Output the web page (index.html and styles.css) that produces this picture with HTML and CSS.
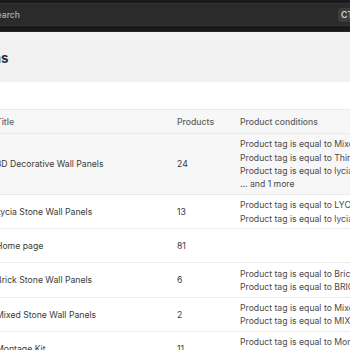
FILE: index.html
```html
<!DOCTYPE html>
<html lang="en">
<head>
<meta charset="utf-8">
<title>Collections</title>
<link rel="stylesheet" href="styles.css">
</head>
<body>
<header class="topbar">
  <div class="search">
    <span class="search-text">Search</span>
    <span class="kbd">CTRL K</span>
  </div>
</header>
<main class="page">
  <h1 class="page-title">Collections</h1>
  <section class="card">
    <div class="card-bar"></div>
    <table class="table">
      <colgroup>
        <col class="c-lead">
        <col class="c-title">
        <col class="c-products">
        <col class="c-cond">
      </colgroup>
      <thead>
        <tr>
          <th class="lead"></th>
          <th>Title</th>
          <th>Products</th>
          <th>Product conditions</th>
        </tr>
      </thead>
      <tbody>
        <tr class="hover">
          <td class="lead"><div class="thumb"></div></td>
          <td class="title">3D Decorative Wall Panels</td>
          <td class="num">24</td>
          <td class="cond">
            <div>Product tag is equal to Mixed Stone</div>
            <div>Product tag is equal to Thin Stone</div>
            <div>Product tag is equal to lycia</div>
            <div>... and 1 more</div>
          </td>
        </tr>
        <tr>
          <td class="lead"><div class="thumb"></div></td>
          <td class="title">Lycia Stone Wall Panels</td>
          <td class="num">13</td>
          <td class="cond">
            <div>Product tag is equal to LYCIA</div>
            <div>Product tag is equal to lycia</div>
          </td>
        </tr>
        <tr>
          <td class="lead"><div class="thumb"></div></td>
          <td class="title">Home page</td>
          <td class="num">81</td>
          <td class="cond"></td>
        </tr>
        <tr>
          <td class="lead"><div class="thumb"></div></td>
          <td class="title">Brick Stone Wall Panels</td>
          <td class="num">6</td>
          <td class="cond">
            <div>Product tag is equal to Brick</div>
            <div>Product tag is equal to BRICK</div>
          </td>
        </tr>
        <tr>
          <td class="lead"><div class="thumb"></div></td>
          <td class="title">Mixed Stone Wall Panels</td>
          <td class="num">2</td>
          <td class="cond">
            <div>Product tag is equal to Mixed</div>
            <div>Product tag is equal to MIXED</div>
          </td>
        </tr>
        <tr>
          <td class="lead"><div class="thumb"></div></td>
          <td class="title">Montage Kit</td>
          <td class="num">11</td>
          <td class="cond">
            <div>Product tag is equal to Montage</div>
            <div>Product tag is equal to MONTAGE</div>
          </td>
        </tr>
      </tbody>
    </table>
  </section>
</main>
</body>
</html>
```
FILE: styles.css
```css
* { box-sizing: border-box; }

html, body {
  margin: 0;
  padding: 0;
  background: #f1f1f1;
  font-family: Inter, "Noto Sans", "Liberation Sans", sans-serif;
  overflow: hidden;
}

.topbar {
  height: 32px;
  background: #1a1a1a;
  padding-top: 3px;
  overflow: hidden;
  border-bottom: 1px solid #262626;
}

.search {
  display: flex;
  align-items: center;
  margin-left: -30px;
  width: 420px;
  height: 23px;
  padding: 1px 0 0 20px;
  background: #2b2b2b;
  border: 1px solid #343434;
  border-radius: 5px;
}

.search-text {
  flex: 0 0 347px;
  font-size: 8.67px;
  color: #b0b0b0;
  font-weight: 500;
}

.kbd {
  flex: none;
  height: 14px;
  line-height: 14px;
  padding: 0 3px;
  font-size: 8.67px;
  font-weight: 600;
  color: #d6d6d6;
  background: #3d3d3d;
  border-radius: 3px;
}

.page {
  padding-top: 18px;
}

.page-title {
  margin: 0 0 0 -65px;
  font-size: 13.33px;
  line-height: 16px;
  font-weight: 700;
  color: #303030;
}

.card {
  margin: 16px 0 0 -60px;
  width: 640px;
  background: #ffffff;
}

.card-bar {
  height: 28px;
  border-bottom: 1px solid #ebebeb;
}

.table {
  width: 100%;
  table-layout: fixed;
  border-collapse: collapse;
  font-size: 8.67px;
  line-height: 13.33px;
}

.c-lead { width: 56px; }
.c-title { width: 181px; }
.c-products { width: 63px; }

.table th {
  background: #f7f7f7;
  color: #616161;
  font-weight: 500;
  text-align: left;
  padding: 6px 0 3.7px;
  white-space: nowrap;
}

.table td {
  padding: 4.3px 0 2.3px;
  border-top: 1px solid #ebebeb;
  vertical-align: middle;
  color: #3a3a3a;
  white-space: nowrap;
}

.table td.cond {
  vertical-align: top;
  color: #4a4a4a;
}

.thumb { height: 26.67px; }

.table tr.hover td { background: #f7f7f7; }
```
